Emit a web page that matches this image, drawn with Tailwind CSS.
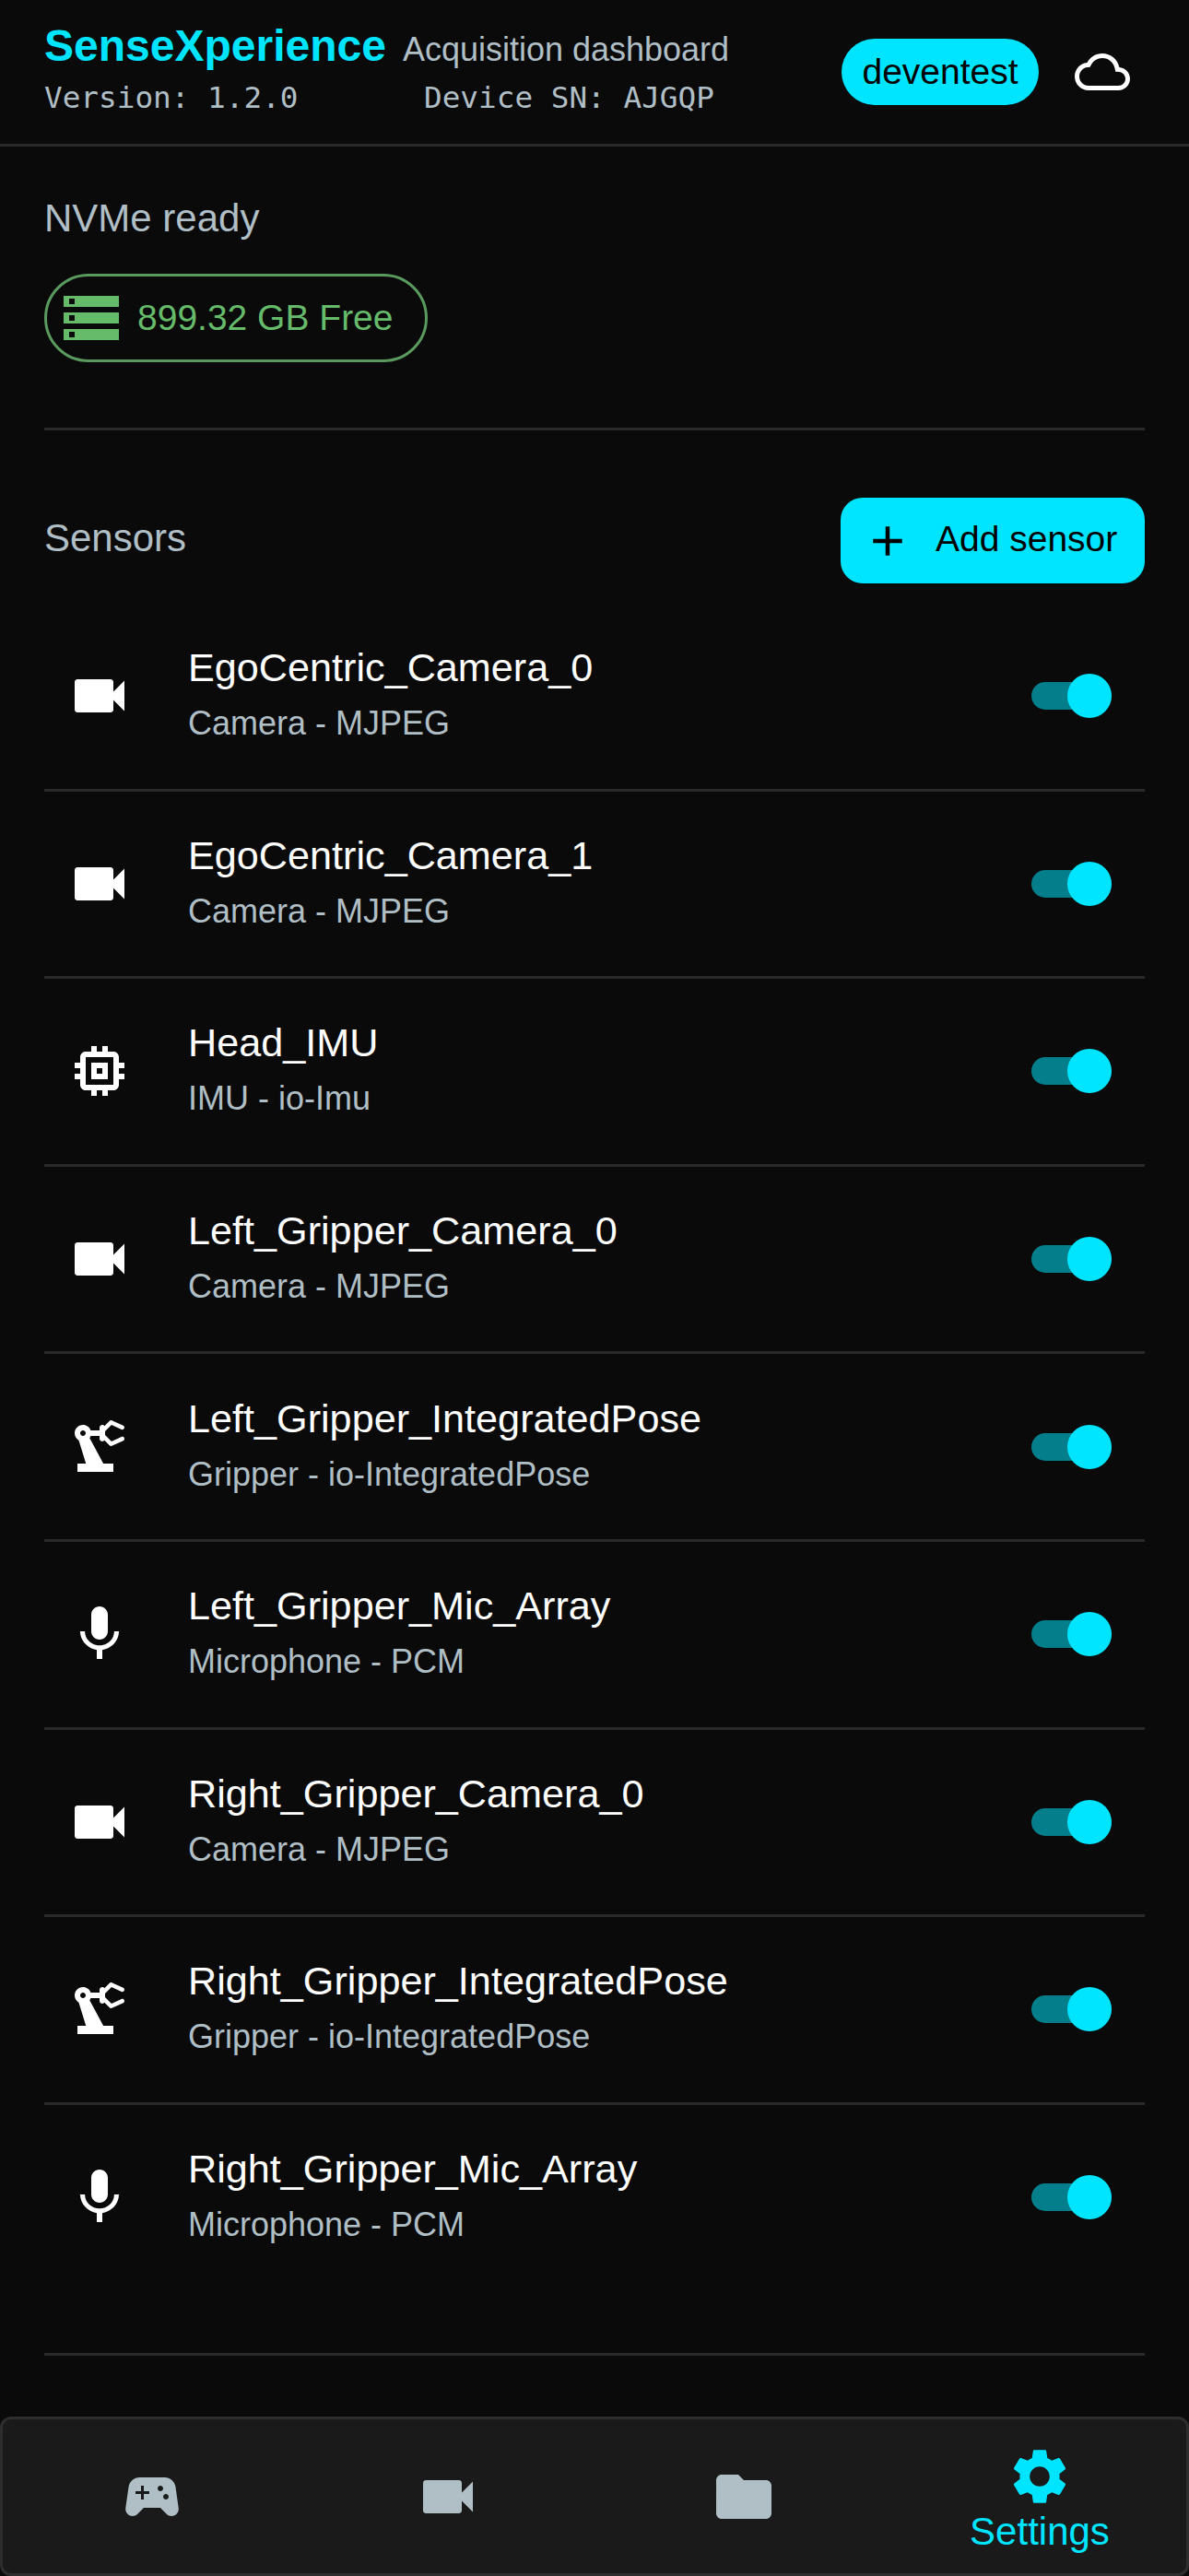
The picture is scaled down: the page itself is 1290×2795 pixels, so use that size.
<!DOCTYPE html>
<html lang="en">
<head>
<meta charset="UTF-8">
<title>SenseXperience</title>
<script src="https://cdn.jsdelivr.net/npm/@tailwindcss/browser@4"></script>
</head>
<body class="bg-[#0a0a0a] font-['Liberation_Sans',sans-serif] text-white w-[1290px] h-[2795px] overflow-hidden flex flex-col">
<!-- icon set -->
<svg class="hidden">
  <symbol id="i-cam" viewBox="0 0 24 24"><path d="M17 10.5V7c0-.55-.45-1-1-1H4c-.55 0-1 .45-1 1v10c0 .55.45 1 1 1h12c.55 0 1-.45 1-1v-3.5l4 4v-11l-4 4z"/></symbol>
  <symbol id="i-chip" viewBox="0 0 24 24"><path d="M15 9H9v6h6V9zm-2 4h-2v-2h2v2zm8-2V9h-2V7c0-1.1-.9-2-2-2h-2V3h-2v2h-2V3H9v2H7c-1.1 0-2 .9-2 2v2H3v2h2v2H3v2h2v2c0 1.1.9 2 2 2h2v2h2v-2h2v2h2v-2h2c1.1 0 2-.9 2-2v-2h2v-2h-2v-2h2zm-4 6H7V7h10v10z"/></symbol>
  <symbol id="i-arm" viewBox="0 0 24 24"><path d="M19.93,8.35l-3.6,1.68L14,7.7V6.3l2.33-2.33l3.6,1.68c0.38,0.18,0.82,0.01,1-0.36c0.18-0.38,0.01-0.82-0.36-1l-3.92-1.83c-0.38-0.18-0.83-0.1-1.13,0.2L13.78,4.4C13.6,4.16,13.32,4,13,4c-0.55,0-1,0.45-1,1v1H8.82C8.4,4.84,7.3,4,6,4C4.34,4,3,5.34,3,7c0,1.1,0.6,2.05,1.48,2.58L7.08,18H4v3h13v-3h-3.62L8.41,8.77C8.58,8.53,8.72,8.28,8.82,8H12v1c0,0.55,0.45,1,1,1c0.32,0,0.6-0.16,0.78-0.4l1.74,1.74c0.3,0.3,0.75,0.38,1.13,0.2l3.92-1.83c0.38-0.18,0.54-0.62,0.36-1C20.75,8.34,20.31,8.17,19.93,8.35z M6,8C5.45,8,5,7.55,5,7c0-0.55,0.45-1,1-1s1,0.45,1,1C7,7.55,6.55,8,6,8z"/></symbol>
  <symbol id="i-mic" viewBox="0 0 24 24"><path d="M12 14c1.66 0 2.99-1.34 2.99-3L15 5c0-1.66-1.34-3-3-3S9 3.34 9 5v6c0 1.66 1.34 3 3 3zm5.3-3c0 3-2.54 5.1-5.3 5.1S6.7 14 6.7 11H5c0 3.41 2.72 6.23 6 6.72V21h2v-3.28c3.28-.48 6-3.3 6-6.72h-1.7z"/></symbol>
</svg>

<!-- header -->
<header class="h-[159px] shrink-0 border-b-3 border-[#2a2a2a] pl-12 pr-12 flex items-start justify-between">
  <div class="pt-[26px]">
    <div class="flex items-baseline gap-[18px] h-[48px]">
      <span class="text-[48px] leading-[48px] font-bold text-[#00e5ff]">SenseXperience</span>
      <span class="text-[36px] leading-[48px] text-[#b0bec5]">Acquisition dashboard</span>
    </div>
    <div class="flex mt-[12px] font-['DejaVu_Sans_Mono',monospace] text-[32.7px] leading-[40px] text-[#b0bec5]">
      <span class="w-[412px]">Version: 1.2.0</span>
      <span>Device SN: AJGQP</span>
    </div>
  </div>
  <div class="flex items-center mt-[42px]">
    <div class="w-[214px] h-[72px] rounded-[36px] bg-[#00e5ff] text-black text-[39px] flex items-center justify-center">deventest</div>
    <svg class="w-[60px] h-[60px] ml-[39px] mr-[16px] fill-white" viewBox="0 0 24 24"><path d="M12 6c2.62 0 4.88 1.86 5.39 4.43l.3 1.5 1.53.11c1.56.1 2.78 1.41 2.78 2.96 0 1.65-1.35 3-3 3H6c-2.21 0-4-1.79-4-4 0-2.05 1.53-3.76 3.56-3.97l1.07-.11.5-.95C8.08 7.14 9.94 6 12 6m0-2C9.11 4 6.6 5.64 5.35 8.04 2.34 8.36 0 10.91 0 14c0 3.31 2.69 6 6 6h13c2.76 0 5-2.24 5-5 0-2.64-2.05-4.78-4.65-4.96C18.67 6.59 15.64 4 12 4z"/></svg>
  </div>
</header>

<main class="flex-1 px-12 flex flex-col">
  <!-- storage -->
  <section class="h-[308px] shrink-0 border-b-3 border-[#2a2a2a] pt-[54px]">
    <h2 class="text-[42px] leading-[48px] text-[#b0bec5]">NVMe ready</h2>
    <div class="mt-[36px] w-[416px] h-[96px] rounded-[48px] border-3 border-[#5a9a5e] flex items-center pl-[6px] text-[#66bb6a]">
      <svg class="ml-[6px] w-[72px] h-[72px] fill-[#66bb6a]" viewBox="0 0 24 24"><path d="M2 20h20v-4H2v4zm2-3h2v2H4v-2zM2 4v4h20V4H2zm4 3H4V5h2v2zm-4 7h20v-4H2v4zm2-3h2v2H4v-2z"/></svg>
      <span class="ml-[14px] text-[39px]">899.32 GB Free</span>
    </div>
  </section>

  <!-- sensors -->
  <section class="flex items-center justify-between mt-[73px] h-[93px] shrink-0">
    <h2 class="text-[42px] text-[#b0bec5] mb-[6px]">Sensors</h2>
    <button class="w-[330px] h-[93px] rounded-[24px] bg-[#00e5ff] text-black text-[39px] flex items-center pl-[24px]">
      <svg class="w-[54px] h-[54px] fill-black" viewBox="0 0 24 24"><path d="M19 13h-6v6h-2v-6H5v-2h6V5h2v6h6v2z"/></svg>
      <span class="ml-[25px] mb-[3px]">Add sensor</span>
    </button>
  </section>

  <ul class="mt-[22px] h-[1901px] shrink-0 border-b-3 border-[#2a2a2a]">
    <li class="h-[203.6px] border-b-3 border-[#2a2a2a] flex items-center pl-6 pr-[36px]">
      <svg class="w-[72px] h-[72px] fill-white"><use href="#i-cam"/></svg>
      <div class="ml-[60px] mb-[10px] flex-1"><p class="text-[43.2px] leading-[70px]">EgoCentric_Camera_0</p><p class="text-[36px] leading-[52px] text-[#b0bec5]">Camera - MJPEG</p></div>
      <div class="relative w-[87px] h-[30px] rounded-[15px] bg-[#057e8c]"><div class="absolute -top-[9px] right-0 w-[48px] h-[48px] rounded-full bg-[#00e5ff]"></div></div>
    </li>
    <li class="h-[203.6px] border-b-3 border-[#2a2a2a] flex items-center pl-6 pr-[36px]">
      <svg class="w-[72px] h-[72px] fill-white"><use href="#i-cam"/></svg>
      <div class="ml-[60px] mb-[10px] flex-1"><p class="text-[43.2px] leading-[70px]">EgoCentric_Camera_1</p><p class="text-[36px] leading-[52px] text-[#b0bec5]">Camera - MJPEG</p></div>
      <div class="relative w-[87px] h-[30px] rounded-[15px] bg-[#057e8c]"><div class="absolute -top-[9px] right-0 w-[48px] h-[48px] rounded-full bg-[#00e5ff]"></div></div>
    </li>
    <li class="h-[203.6px] border-b-3 border-[#2a2a2a] flex items-center pl-6 pr-[36px]">
      <svg class="w-[72px] h-[72px] fill-white"><use href="#i-chip"/></svg>
      <div class="ml-[60px] mb-[10px] flex-1"><p class="text-[43.2px] leading-[70px]">Head_IMU</p><p class="text-[36px] leading-[52px] text-[#b0bec5]">IMU - io-Imu</p></div>
      <div class="relative w-[87px] h-[30px] rounded-[15px] bg-[#057e8c]"><div class="absolute -top-[9px] right-0 w-[48px] h-[48px] rounded-full bg-[#00e5ff]"></div></div>
    </li>
    <li class="h-[203.6px] border-b-3 border-[#2a2a2a] flex items-center pl-6 pr-[36px]">
      <svg class="w-[72px] h-[72px] fill-white"><use href="#i-cam"/></svg>
      <div class="ml-[60px] mb-[10px] flex-1"><p class="text-[43.2px] leading-[70px]">Left_Gripper_Camera_0</p><p class="text-[36px] leading-[52px] text-[#b0bec5]">Camera - MJPEG</p></div>
      <div class="relative w-[87px] h-[30px] rounded-[15px] bg-[#057e8c]"><div class="absolute -top-[9px] right-0 w-[48px] h-[48px] rounded-full bg-[#00e5ff]"></div></div>
    </li>
    <li class="h-[203.6px] border-b-3 border-[#2a2a2a] flex items-center pl-6 pr-[36px]">
      <svg class="w-[72px] h-[72px] fill-white"><use href="#i-arm"/></svg>
      <div class="ml-[60px] mb-[10px] flex-1"><p class="text-[43.2px] leading-[70px]">Left_Gripper_IntegratedPose</p><p class="text-[36px] leading-[52px] text-[#b0bec5]">Gripper - io-IntegratedPose</p></div>
      <div class="relative w-[87px] h-[30px] rounded-[15px] bg-[#057e8c]"><div class="absolute -top-[9px] right-0 w-[48px] h-[48px] rounded-full bg-[#00e5ff]"></div></div>
    </li>
    <li class="h-[203.6px] border-b-3 border-[#2a2a2a] flex items-center pl-6 pr-[36px]">
      <svg class="w-[72px] h-[72px] fill-white"><use href="#i-mic"/></svg>
      <div class="ml-[60px] mb-[10px] flex-1"><p class="text-[43.2px] leading-[70px]">Left_Gripper_Mic_Array</p><p class="text-[36px] leading-[52px] text-[#b0bec5]">Microphone - PCM</p></div>
      <div class="relative w-[87px] h-[30px] rounded-[15px] bg-[#057e8c]"><div class="absolute -top-[9px] right-0 w-[48px] h-[48px] rounded-full bg-[#00e5ff]"></div></div>
    </li>
    <li class="h-[203.6px] border-b-3 border-[#2a2a2a] flex items-center pl-6 pr-[36px]">
      <svg class="w-[72px] h-[72px] fill-white"><use href="#i-cam"/></svg>
      <div class="ml-[60px] mb-[10px] flex-1"><p class="text-[43.2px] leading-[70px]">Right_Gripper_Camera_0</p><p class="text-[36px] leading-[52px] text-[#b0bec5]">Camera - MJPEG</p></div>
      <div class="relative w-[87px] h-[30px] rounded-[15px] bg-[#057e8c]"><div class="absolute -top-[9px] right-0 w-[48px] h-[48px] rounded-full bg-[#00e5ff]"></div></div>
    </li>
    <li class="h-[203.6px] border-b-3 border-[#2a2a2a] flex items-center pl-6 pr-[36px]">
      <svg class="w-[72px] h-[72px] fill-white"><use href="#i-arm"/></svg>
      <div class="ml-[60px] mb-[10px] flex-1"><p class="text-[43.2px] leading-[70px]">Right_Gripper_IntegratedPose</p><p class="text-[36px] leading-[52px] text-[#b0bec5]">Gripper - io-IntegratedPose</p></div>
      <div class="relative w-[87px] h-[30px] rounded-[15px] bg-[#057e8c]"><div class="absolute -top-[9px] right-0 w-[48px] h-[48px] rounded-full bg-[#00e5ff]"></div></div>
    </li>
    <li class="h-[200.6px] flex items-center pl-6 pr-[36px]">
      <svg class="w-[72px] h-[72px] fill-white"><use href="#i-mic"/></svg>
      <div class="ml-[60px] mb-[10px] flex-1"><p class="text-[43.2px] leading-[70px]">Right_Gripper_Mic_Array</p><p class="text-[36px] leading-[52px] text-[#b0bec5]">Microphone - PCM</p></div>
      <div class="relative w-[87px] h-[30px] rounded-[15px] bg-[#057e8c]"><div class="absolute -top-[9px] right-0 w-[48px] h-[48px] rounded-full bg-[#00e5ff]"></div></div>
    </li>
  </ul>
</main>

<!-- bottom nav -->
<nav class="h-[173px] shrink-0 bg-[#1a1a1a] border-3 border-[#2e2e2e] rounded-[12px] grid grid-cols-[repeat(4,321px)] pl-[1.5px]">
  <div class="flex items-center justify-center"><svg class="w-[72px] h-[72px] fill-[#b0bec5]" viewBox="0 0 24 24"><path d="M21.58 16.09l-1.09-7.66C20.21 6.46 18.52 5 16.53 5H7.47C5.48 5 3.79 6.46 3.51 8.43l-1.09 7.66C2.2 17.63 3.39 19 4.94 19c.68 0 1.32-.27 1.8-.75L9 16h6l2.25 2.25c.48.48 1.13.75 1.8.75 1.56 0 2.75-1.37 2.53-2.91zM11 11H9v2H8v-2H6v-1h2V8h1v2h2v1zm4-1c-.55 0-1-.45-1-1s.45-1 1-1 1 .45 1 1-.45 1-1 1zm2 3c-.55 0-1-.45-1-1s.45-1 1-1 1 .45 1 1-.45 1-1 1z"/></svg></div>
  <div class="flex items-center justify-center"><svg class="w-[72px] h-[72px] fill-[#b0bec5]"><use href="#i-cam"/></svg></div>
  <div class="flex items-center justify-center"><svg class="w-[72px] h-[72px] fill-[#b0bec5]" viewBox="0 0 24 24"><path d="M10 4H4c-1.1 0-1.99.9-1.99 2L2 18c0 1.1.9 2 2 2h16c1.1 0 2-.9 2-2V8c0-1.1-.9-2-2-2h-8l-2-2z"/></svg></div>
  <div class="flex flex-col items-center justify-center text-[#00e5ff] pt-[4px]">
    <svg class="w-[72px] h-[72px] fill-[#00e5ff]" viewBox="0 0 24 24"><path d="M19.14 12.94c.04-.3.06-.61.06-.94 0-.32-.02-.64-.07-.94l2.03-1.58c.18-.14.23-.41.12-.61l-1.92-3.32c-.12-.22-.37-.29-.59-.22l-2.39.96c-.5-.38-1.03-.7-1.62-.94l-.36-2.54c-.04-.24-.24-.41-.48-.41h-3.84c-.24 0-.43.17-.47.41l-.36 2.54c-.59.24-1.13.57-1.62.94l-2.39-.96c-.22-.08-.47 0-.59.22L2.74 8.87c-.12.21-.08.47.12.61l2.03 1.58c-.05.3-.09.63-.09.94s.02.64.07.94l-2.03 1.58c-.18.14-.23.41-.12.61l1.92 3.32c.12.22.37.29.59.22l2.39-.96c.5.38 1.03.7 1.62.94l.36 2.54c.05.24.24.41.48.41h3.84c.24 0 .44-.17.47-.41l.36-2.54c.59-.24 1.13-.56 1.62-.94l2.39.96c.22.08.47 0 .59-.22l1.92-3.32c.12-.22.07-.47-.12-.61l-2.01-1.58zM12 15.6c-1.98 0-3.6-1.62-3.6-3.6s1.62-3.6 3.6-3.6 3.6 1.62 3.6 3.6-1.62 3.6-3.6 3.6z"/></svg>
    <span class="text-[42px] leading-[48px]">Settings</span>
  </div>
</nav>
</body>
</html>
